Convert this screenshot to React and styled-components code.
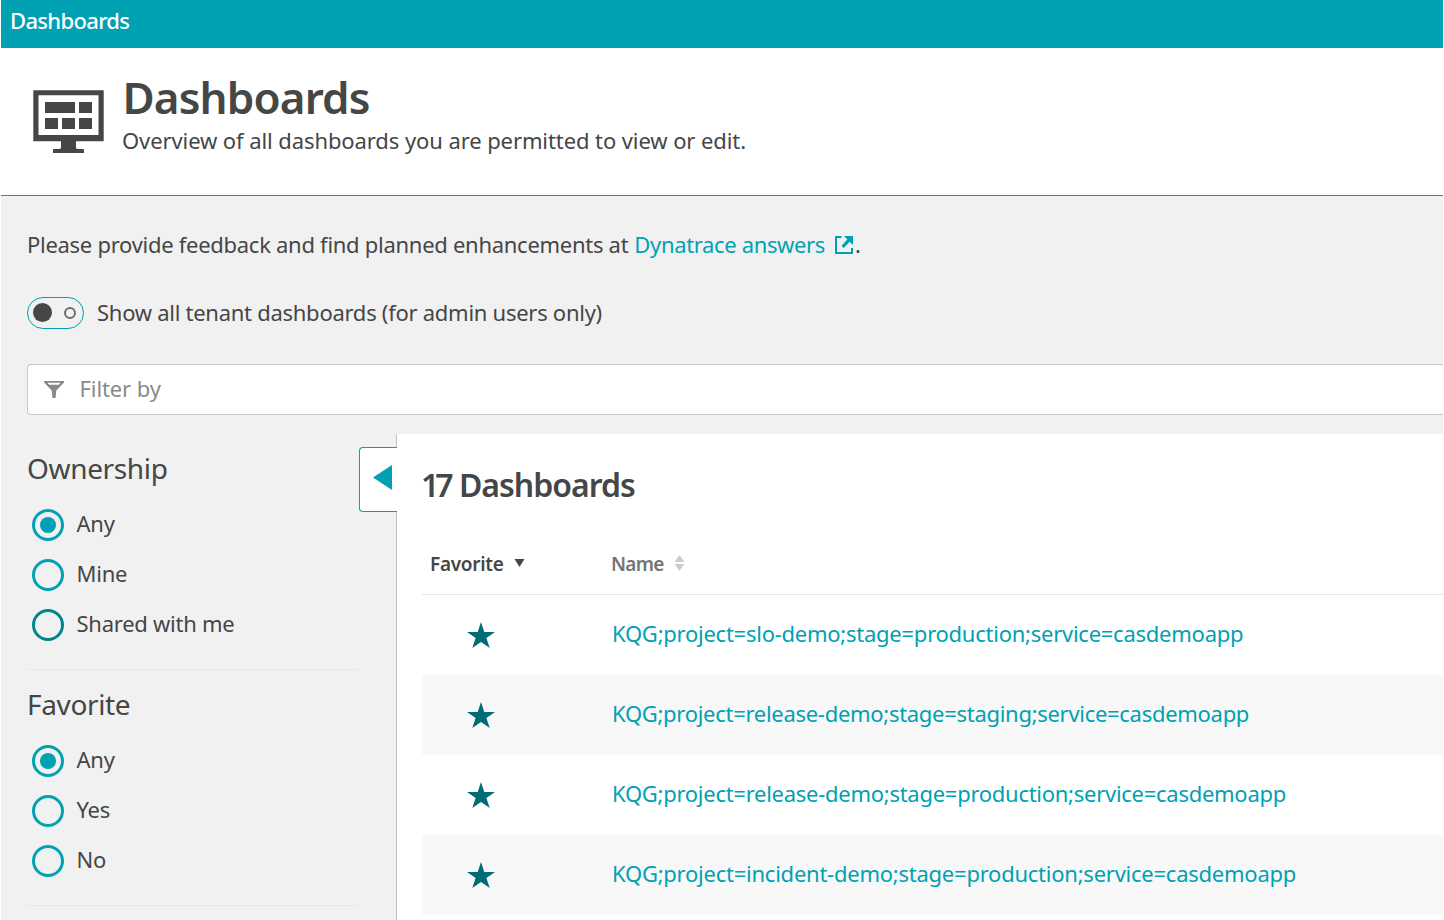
import React from "react";
import styled, { createGlobalStyle } from "styled-components";

const teal = "#00a1b2";
const ink = "#454646";

const GlobalStyle = createGlobalStyle`
  * { box-sizing: border-box; }
  body { margin: 0; background: #fff; overflow: hidden; }
`;

const Page = styled.div`
  width: 1444px;
  height: 920px;
  padding: 0 1px;
  overflow: hidden;
  display: flex;
  flex-direction: column;
  font-family: "Noto Sans", "Open Sans", sans-serif;
  font-size: 22px;
  line-height: 30px;
  color: ${ink};
  white-space: nowrap;
`;

const TopBar = styled.nav`
  flex: none;
  height: 48px;
  padding: 5px 0 0 9px;
  background: ${teal};
  color: #fff;
  font-weight: 500;
  letter-spacing: -0.67px;
`;

const Header = styled.header`
  flex: none;
  height: 148px;
  padding: 23px 0 0 32px;
  display: flex;
  border-bottom: 1px solid ${teal};
`;

const MonitorIcon = styled.svg`
  flex: none;
  width: 71px;
  height: 64px;
  margin: 19px 18px 0 0;
`;

const Title = styled.h1`
  margin: 0;
  font-size: 44px;
  line-height: 52px;
  padding: 0 0 2px 0.5px;
  font-weight: 600;
  letter-spacing: -0.85px;
`;

const Subtitle = styled.p`
  margin: 0;
  letter-spacing: -0.09px;
`;

const Content = styled.main`
  flex: 1;
  min-height: 0;
  display: flex;
  flex-direction: column;
  background: #f1f1f1;
`;

const Feedback = styled.p`
  margin: 33px 0 0 26px;
  display: flex;
  letter-spacing: -0.28px;
`;

const AnswersLink = styled.a`
  display: flex;
  margin-left: 6px;
  letter-spacing: -0.35px;
  color: ${teal};
`;

const ExternalIcon = styled.svg`
  width: 18px;
  height: 18px;
  margin: 7px 2px 0 10px;
`;

const SwitchRow = styled.label`
  margin: 38px 0 0 26px;
  height: 32px;
  display: flex;
  align-items: center;
  gap: 13px;
  letter-spacing: -0.27px;
`;

const LabelText = styled.span`
  padding-bottom: ${(p) => p.$lift}px;
`;

const Track = styled.span`
  width: 57px;
  height: 32px;
  padding: 0 7px 0 5px;
  display: flex;
  align-items: center;
  justify-content: space-between;
  border: 1px solid ${teal};
  border-radius: 16px;
`;

const Knob = styled.span`
  width: 19px;
  height: 19px;
  margin-bottom: 1px;
  border-radius: 50%;
  background: ${ink};
`;

const OffMark = styled.span`
  width: 12px;
  height: 12px;
  border: 2px solid #6d6d6d;
  border-radius: 50%;
`;

const FilterField = styled.div`
  flex: none;
  height: 51px;
  margin: 35px 0 0 26px;
  padding-left: 16px;
  display: flex;
  align-items: center;
  background: #fff;
  border: 1px solid #c7c7c7;
  border-right: 0;
  border-radius: 4px 0 0 4px;
  color: #898989;
  letter-spacing: -0.1px;
`;

const FunnelIcon = styled.svg`
  width: 20px;
  height: 17px;
  margin-right: 15.5px;
`;

const Columns = styled.div`
  flex: 1;
  min-height: 0;
  margin-top: 19px;
  display: flex;
`;

const Sidebar = styled.aside`
  flex: none;
  width: 357px;
  padding-left: 26px;
  display: flex;
  flex-direction: column;
`;

const FilterGroup = styled.section`
  flex: none;
  height: 236px;
  border-bottom: 1px solid #e6e6e6;
  padding-top: 15px;
`;

const GroupTitle = styled.h2`
  margin: 0 0 22px;
  font-size: 28px;
  line-height: 38px;
  font-weight: 400;
  letter-spacing: -0.35px;
`;

const Choice = styled.label`
  height: 32px;
  margin: 0 0 18px 5px;
  display: flex;
  align-items: center;
  gap: 12.5px;
  letter-spacing: -0.25px;
`;

const Radio = styled.span`
  width: 32px;
  height: 32px;
  display: grid;
  place-items: center;
  border: 3px solid ${(p) => (p.$hover ? "#00848e" : teal)};
  border-radius: 50%;
  &::after {
    content: "";
    width: 16px;
    height: 16px;
    border-radius: 50%;
    background: ${(p) => (p.$checked ? teal : "transparent")};
  }
`;

const CollapseGutter = styled.div`
  flex: none;
  width: 39px;
  padding: 13px 0 0 1px;
  margin-right: -1px;
  z-index: 1;
`;

const CollapseButton = styled.button`
  display: block;
  width: 38px;
  height: 65px;
  padding: 0 0 0 13px;
  background: #fff;
  border: 1px solid ${teal};
  border-right: 0;
  border-radius: 4px 0 0 4px;
`;

const CollapseArrow = styled.svg`
  display: block;
  width: 20px;
  height: 27px;
  margin-top: -5px;
`;

const Panel = styled.section`
  flex: 1;
  padding-left: 25px;
  background: #fff;
  border-left: 1px solid #c0c0c0;
`;

const PanelTitle = styled.h2`
  margin: 29px 0 0;
  font-size: 32px;
  line-height: 44px;
  font-weight: 600;
  letter-spacing: -1px;
`;

const Count = styled.span`
  margin: 0 2px 0 -1px;
  letter-spacing: -4px;
`;

const TableRow = styled.div`
  height: 80px;
  display: grid;
  grid-template-columns: 190px 1fr;
  align-items: center;
  background: ${(p) => (p.$shaded ? "#f8f8f8" : "#fff")};
`;

const TableHead = styled(TableRow)`
  height: 88px;
  grid-template-columns: 189px 1fr;
  align-items: end;
  padding-bottom: 17px;
  border-bottom: 1px solid #e6e6e6;
  font-size: 19px;
  line-height: 26px;
  font-weight: 600;
`;

const HeadCell = styled.div`
  display: flex;
  align-items: center;
  padding-left: ${(p) => p.$indent || 0}px;
  letter-spacing: ${(p) => p.$tracking}px;
  color: ${(p) => (p.$muted ? "#737474" : ink)};
`;

const SortIcon = styled.svg`
  margin: 0 0 3px 10px;
`;

const StarIcon = styled.svg`
  width: 28px;
  height: 26px;
  margin: 0 0 0 45px;
`;

const DashboardLink = styled.a`
  padding-bottom: 4px;
  color: ${teal};
  letter-spacing: ${(p) => p.$tracking}px;
`;

const groups = [
  { title: "Ownership", options: ["Any", "Mine", "Shared with me"], hover: 2 },
  { title: "Favorite", options: ["Any", "Yes", "No"] },
];

const dashboards = [
  { name: "KQG;project=slo-demo;stage=production;service=casdemoapp", tracking: -0.25 },
  { name: "KQG;project=release-demo;stage=staging;service=casdemoapp", tracking: -0.29 },
  { name: "KQG;project=release-demo;stage=production;service=casdemoapp", tracking: -0.27 },
  { name: "KQG;project=incident-demo;stage=production;service=casdemoapp", tracking: -0.24 },
];

export default function App() {
  return (
    <Page>
      <GlobalStyle />
      <TopBar>Dashboards</TopBar>
      <Header>
        <MonitorIcon viewBox="0 0 71 64" fill={ink}>
          <path fillRule="evenodd" d="M0.300 0.300H70.700V51.300H43V57.500Q43 59 45 59H50Q51 59 51 60V63H20V60Q20 59 21 59H26Q28 59 28 57.500V51.300H0.300ZM5.500 5.300V45H65.500V5.300Z" />
          <path d="M12 12H42V23H12ZM46 12H59V23H46ZM12 28H25V39H12ZM29 28H42V39H29ZM46 28H59V39H46Z" />
        </MonitorIcon>
        <div>
          <Title>Dashboards</Title>
          <Subtitle>Overview of all dashboards you are permitted to view or edit.</Subtitle>
        </div>
      </Header>
      <Content>
        <Feedback>
          <span>Please provide feedback and find planned enhancements at</span>
          <AnswersLink>
            Dynatrace answers
            <ExternalIcon viewBox="0 0 18 18">
              <path d="M6.500 1H1V17H17V12" fill="none" stroke={teal} strokeWidth="2" />
              <path d="M9 0H18V9L14.700 5.700L8.700 12L6.500 9.800L12.300 3.600Z" fill={teal} />
            </ExternalIcon>
          </AnswersLink>
          <span>.</span>
        </Feedback>
        <SwitchRow>
          <Track><Knob /><OffMark /></Track>
          <LabelText $lift={2}>Show all tenant dashboards (for admin users only)</LabelText>
        </SwitchRow>
        <FilterField>
          <FunnelIcon viewBox="0 0 20 17" fill="#898989">
            <path fillRule="evenodd" d="M0 0H20V1.500L12.300 9.500L11.500 17H8.500L7.700 9.500L0 1.500ZM3.500 1.800L5.300 3.800H14.700L16.500 1.800Z" />
          </FunnelIcon>
          <LabelText $lift={3}>Filter by</LabelText>
        </FilterField>
        <Columns>
          <Sidebar>
            {groups.map((g) => (
              <FilterGroup key={g.title}>
                <GroupTitle>{g.title}</GroupTitle>
                {g.options.map((o, i) => (
                  <Choice key={o}>
                    <Radio $checked={i === 0} $hover={i === g.hover} />
                    <LabelText $lift={4}>{o}</LabelText>
                  </Choice>
                ))}
              </FilterGroup>
            ))}
          </Sidebar>
          <CollapseGutter>
            <CollapseButton aria-label="Collapse filters">
              <CollapseArrow viewBox="0 0 20 27"><path d="M0 13.500L19 1V26Z" fill={teal} /></CollapseArrow>
            </CollapseButton>
          </CollapseGutter>
          <Panel>
            <PanelTitle><Count>17</Count> Dashboards</PanelTitle>
            <TableHead>
              <HeadCell $indent={8} $tracking={-0.3}>
                Favorite
                <SortIcon width="11" height="8"><path d="M0.500 0H10.500L5.500 8Z" fill={ink} /></SortIcon>
              </HeadCell>
              <HeadCell $tracking={-0.7} $muted>
                Name
                <SortIcon width="11" height="16"><path d="M5.500 0L10.500 7H0.500ZM0.500 9H10.500L5.500 16Z" fill="#ccc" /></SortIcon>
              </HeadCell>
            </TableHead>
            {dashboards.map((d, i) => (
              <TableRow key={d.name} $shaded={i % 2 === 1}>
                <StarIcon viewBox="0 0 28 26">
                  <path d="M14 0L17.300 9.900H28L19.400 16L22.700 26L14 19.900L5.300 26L8.600 16L0 9.900H10.700Z" fill="#006d75" />
                </StarIcon>
                <DashboardLink $tracking={d.tracking}>{d.name}</DashboardLink>
              </TableRow>
            ))}
          </Panel>
        </Columns>
      </Content>
    </Page>
  );
}
